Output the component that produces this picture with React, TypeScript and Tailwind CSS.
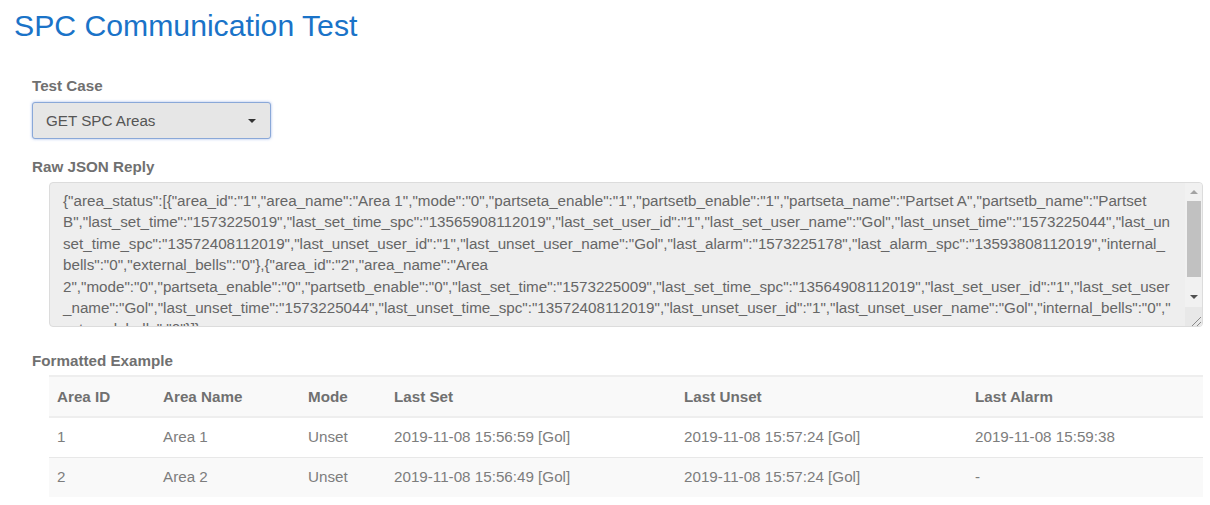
const json = `{"area_status":[{"area_id":"1","area_name":"Area 1","mode":"0","partseta_enable":"1","partsetb_enable":"1","partseta_name":"Partset A","partsetb_name":"Partset B","last_set_time":"1573225019","last_set_time_spc":"13565908112019","last_set_user_id":"1","last_set_user_name":"Gol","last_unset_time":"1573225044","last_unset_time_spc":"13572408112019","last_unset_user_id":"1","last_unset_user_name":"Gol","last_alarm":"1573225178","last_alarm_spc":"13593808112019","internal_bells":"0","external_bells":"0"},{"area_id":"2","area_name":"Area 2","mode":"0","partseta_enable":"0","partsetb_enable":"0","last_set_time":"1573225009","last_set_time_spc":"13564908112019","last_set_user_id":"1","last_set_user_name":"Gol","last_unset_time":"1573225044","last_unset_time_spc":"13572408112019","last_unset_user_id":"1","last_unset_user_name":"Gol","internal_bells":"0","external_bells":"0"}]}`;

const rows = [
  ["1", "Area 1", "Unset", "2019-11-08 15:56:59 [Gol]", "2019-11-08 15:57:24 [Gol]", "2019-11-08 15:59:38"],
  ["2", "Area 2", "Unset", "2019-11-08 15:56:49 [Gol]", "2019-11-08 15:57:24 [Gol]", "-"],
];
const heads = ["Area ID", "Area Name", "Mode", "Last Set", "Last Unset", "Last Alarm"];
const widths = ["w-[106px]", "w-[145px]", "w-[86px]", "w-[290px]", "w-[291px]", "w-auto"];

export default function App() {
  return (
    <div className="w-[1210px] h-[505px] overflow-hidden bg-white text-[15.2px] leading-[21.4px] text-[#6f6f6f] font-['Liberation_Sans',Arial,sans-serif]">
      <h1 className="pl-[14px] pt-[8px] text-[30.2px] leading-[36px] text-[#1a73c8]">SPC Communication Test</h1>

      <div className="pl-[32px] pt-[32px]">
        <label className="block font-bold text-[#707070] leading-[20px]">Test Case</label>
        <button className="mt-[6px] flex items-center justify-between w-[239px] h-[37px] pl-[13px] pr-[14px] rounded-[3px] border border-[#8aa8d8] bg-[#e6e6e6] text-[#555] shadow-[0_0_3px_rgba(102,140,220,0.6)]">
          <span>GET SPC Areas</span>
          <span className="w-0 h-0 border-x-[4px] border-x-transparent border-t-[4px] border-t-[#333]" />
        </button>

        <label className="block mt-[18px] font-bold text-[#707070] leading-[20px]">Raw JSON Reply</label>
        <div className="mt-[5px] ml-[17px] w-[1154px] h-[145px] flex overflow-hidden rounded-[4px] border border-[#dcdcdc] bg-[#eeeeee]">
          <div className="flex-1 min-w-0 pl-[13px] pr-[13px] pt-[7px] text-[#666666] [overflow-wrap:anywhere]">{json}</div>
          <div className="w-[17px] shrink-0 flex flex-col items-center bg-[#f1f1f1]">
            <span className="mt-[7px] w-0 h-0 border-x-[4px] border-x-transparent border-b-[4px] border-b-[#a3a3a3]" />
            <span className="mt-[7px] w-[14px] h-[76px] bg-[#c1c1c1]" />
            <span className="mt-[18px] w-0 h-0 border-x-[4px] border-x-transparent border-t-[4px] border-t-[#505050]" />
            <div className="mt-[auto] w-[17px] h-[19px] bg-[#e8e8e8] flex items-end justify-end">
              <svg width="12" height="12" viewBox="0 0 12 12" fill="none" stroke="#8a8a8a" strokeWidth="1">
                <path d="M2 12 L11 3 M7 12 L11 8" />
              </svg>
            </div>
          </div>
        </div>

        <label className="block mt-[24px] font-bold text-[#707070] leading-[20px]">Formatted Example</label>
        <table className="mt-[4px] ml-[17px] w-[1154px] table-fixed border-collapse">
          <thead>
            <tr className="h-[41px] bg-[#f9f9f9] border-t-2 border-b-2 border-[#eeeeee]">
              {heads.map((h, i) => (
                <th key={h} className={`${widths[i]} pl-[8px] text-left font-bold text-[#707070]`}>{h}</th>
              ))}
            </tr>
          </thead>
          <tbody>
            {rows.map((r, ri) => (
              <tr key={ri} className={ri === 0 ? "h-[40px] border-b border-[#e8e8e8]" : "h-[40px] bg-[#f9f9f9]"}>
                {r.map((c, i) => (
                  <td key={i} className="pl-[8px] pb-[2px] text-[#7d7d7d]">{c}</td>
                ))}
              </tr>
            ))}
          </tbody>
        </table>
      </div>
    </div>
  );
}
